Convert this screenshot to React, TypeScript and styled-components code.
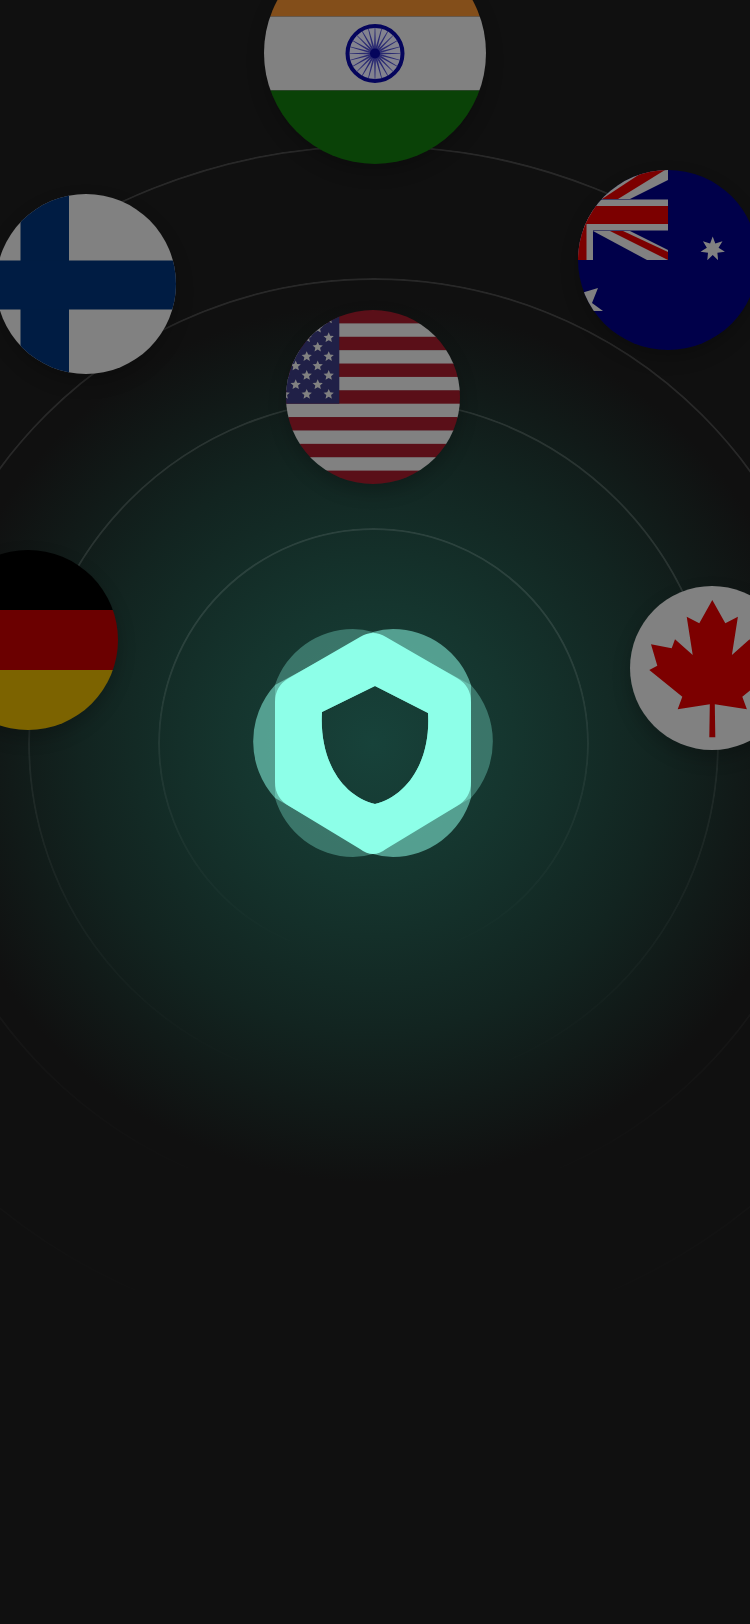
import React from "react";
import styled, { createGlobalStyle } from "styled-components";

const GlobalStyle = createGlobalStyle`
  html, body {
    margin: 0;
    padding: 0;
    background: #101010;
  }
`;

const Stage = styled.main`
  position: relative;
  width: 750px;
  height: 1624px;
  overflow: hidden;
  background:
    radial-gradient(circle 440px at 373px 743px, #17423a 0%, #15352e 32%, #122420 66%, #101010 100%),
    #101010;
`;

// rings and logo share one grid cell, so they all centre on the same point
const Orbit = styled.div`
  position: absolute;
  left: -225px;
  top: 144px;
  width: 1197px;
  height: 1198px;
  display: grid;
  place-items: center;

  > * {
    grid-area: 1 / 1;
  }
`;

const Ring = styled.div<{ $radius: number }>`
  width: ${(p) => p.$radius * 2}px;
  height: ${(p) => p.$radius * 2}px;
  box-sizing: border-box;
  border: 2px solid rgba(255, 255, 255, 0.1);
  border-radius: 50%;
  mask-image: linear-gradient(to bottom, #000 25%, transparent 100%);
`;

const Badge = styled.div<{ $x: number; $y: number; $r: number }>`
  position: absolute;
  left: ${(p) => p.$x - p.$r}px;
  top: ${(p) => p.$y - p.$r}px;
  width: ${(p) => p.$r * 2}px;
  height: ${(p) => p.$r * 2}px;
  border-radius: 50%;
  overflow: hidden;
  box-shadow: 0 8px 18px rgba(0, 0, 0, 0.22);

  svg {
    display: block;
    width: 100%;
    height: 100%;
  }
`;

const Logo = styled.svg`
  width: 256px;
  height: 246px;
  margin-right: 1px;
`;

const starPoints = (cx: number, cy: number, outer: number, inner: number, tips: number) => {
  const pts: string[] = [];
  for (let i = 0; i < tips * 2; i++) {
    const rad = i % 2 === 0 ? outer : inner;
    const a = (Math.PI * i) / tips - Math.PI / 2;
    pts.push(`${(cx + rad * Math.cos(a)).toFixed(2)},${(cy + rad * Math.sin(a)).toFixed(2)}`);
  }
  return pts.join(" ");
};

const Flag = ({ x, y, r, children }: { x: number; y: number; r: number; children: React.ReactNode }) => (
  <Badge $x={x} $y={y} $r={r}>
    <svg viewBox={`${x - r} ${y - r} ${r * 2} ${r * 2}`}>{children}</svg>
  </Badge>
);

const IndiaFlag = () => (
  <Flag x={375} y={52.5} r={111}>
    <rect x={264} y={-59} width={222} height={75} fill="#834e1a" />
    <rect x={264} y={16} width={222} height={74} fill="#818181" />
    <rect x={264} y={90} width={222} height={75} fill="#0a4207" />
    <circle cx={375} cy={53} r={27.5} fill="#83838f" stroke="#05055c" strokeWidth={4} />
    {Array.from({ length: 24 }, (_, i) => (
      <polygon key={i} points="373.9,53 376.1,53 375.3,27 374.7,27" fill="#2a2a72" transform={`rotate(${i * 15} 375 53)`} />
    ))}
    <circle cx={375} cy={53} r={5} fill="#05055c" />
  </Flag>
);

const FinlandFlag = () => (
  <Flag x={86} y={283.5} r={90}>
    <rect x={-4} y={193} width={180} height={181} fill="#818181" />
    <rect x={20.5} y={193} width={48.5} height={181} fill="#001c43" />
    <rect x={-4} y={260} width={180} height={49} fill="#001c43" />
  </Flag>
);

const AustraliaFlag = () => (
  <Flag x={668} y={260} r={90}>
    <rect x={578} y={170} width={180} height={180} fill="#00004a" />
    <polygon points="590,199 630,199 668,180 668,170 632,170" fill="#818181" />
    <polygon points="602,199 618,199 665,170 646,170" fill="#7c0000" />
    <polygon points="593,231 630,231 668,250 668,260 647,260" fill="#818181" />
    <polygon points="610,231 623,231 668,252 668,260" fill="#7c0000" />
    <rect x={563} y={199.5} width={105} height={31} fill="#818181" />
    <rect x={563} y={199} width={30} height={61} fill="#818181" />
    <rect x={569} y={206} width={99} height={18} fill="#7c0000" />
    <rect x={569} y={206} width={17.5} height={54} fill="#7c0000" />
    <polygon points={starPoints(712.7, 249, 12.5, 6, 7)} fill="#818181" />
    <polygon points="598,288 592,303 603,311 580,311 575,295" fill="#818181" />
  </Flag>
);

const UsaFlag = () => {
  const stars: React.ReactNode[] = [];
  for (let col = 0; col < 6; col++) {
    const sx = 328.7 - 11 * col;
    const startY = col % 2 === 0 ? 318.9 : 328.2;
    for (let row = 0; row < 5; row++) {
      const sy = startY + 18.85 * row;
      if (sy < 400) stars.push(<polygon key={`${col}-${row}`} points={starPoints(sx, sy, 5.4, 2.5, 5)} fill="#818181" />);
    }
  }
  return (
    <Flag x={373} y={397} r={87}>
      {Array.from({ length: 13 }, (_, i) => (
        <rect key={i} x={286} y={310 + (i * 174) / 13} width={174} height={174 / 13 + 0.5} fill={i % 2 === 0 ? "#5a0f18" : "#818181"} />
      ))}
      <rect x={286} y={310} width={53.3} height={93.7} fill="#202047" />
      {stars}
    </Flag>
  );
};

const GermanyFlag = () => (
  <Flag x={28} y={640} r={90}>
    <rect x={-62} y={550} width={180} height={60} fill="#000000" />
    <rect x={-62} y={610} width={180} height={60} fill="#6b0000" />
    <rect x={-62} y={670} width={180} height={60} fill="#7c6300" />
  </Flag>
);

const CanadaFlag = () => (
  <Flag x={712} y={668} r={82}>
    <rect x={630} y={586} width={164} height={164} fill="#818181" />
    <polygon
      fill="#7c0000"
      points="712.3,600 699.3,623.3 686.7,616.7 692.7,655 675,639.3 671.7,648.3 651,644.3 657.3,665.7 649.3,670 682.3,696.7 677.7,709.3 709.8,704.3 709.3,737.3 715.3,737.3 714.8,704.3 746.9,709.3 742.3,696.7 775.3,670 767.3,665.7 773.6,644.3 752.9,648.3 749.6,639.3 731.9,655 737.9,616.7 725.3,623.3"
    />
  </Flag>
);

const SHIELD = "M375 686 L322 712 C319 760 342 796 375 804 C408 796 431 760 428 713 Z";

const ShieldLogo = () => (
  <Logo viewBox="245 620 256 246">
    <path
      fill="#8dffe8"
      fillOpacity={0.31}
      fillRule="evenodd"
      d={`M373 632 Q363 629 353 629 A82 82 0 0 0 275 685 L275 798 A82 82 0 0 0 353 857 Q363 857 373 854 L471 798 A84 84 0 0 0 471 685 Z ${SHIELD}`}
    />
    <path
      fill="#8dffe8"
      fillOpacity={0.52}
      fillRule="evenodd"
      d={`M373 632 Q383 629 393 629 A82 82 0 0 1 471 685 L471 798 A82 82 0 0 1 393 857 Q383 857 373 854 L275 798 A84 84 0 0 1 275 685 Z ${SHIELD}`}
    />
    <path
      fill="#8dffe8"
      fillRule="evenodd"
      d={`M360 637 Q373 629 386 637 L457 678 Q471 686 471 702 L471 782 Q471 798 457 806 L386 849 Q373 859 360 849 L289 806 Q275 798 275 782 L275 702 Q275 686 289 678 Z ${SHIELD}`}
    />
  </Logo>
);

const App = () => (
  <>
    <GlobalStyle />
    <Stage>
      <Orbit>
        <Ring $radius={215.5} />
        <Ring $radius={345.5} />
        <Ring $radius={465} />
        <Ring $radius={598} />
        <ShieldLogo />
      </Orbit>
      <IndiaFlag />
      <FinlandFlag />
      <AustraliaFlag />
      <UsaFlag />
      <GermanyFlag />
      <CanadaFlag />
    </Stage>
  </>
);

export default App;
